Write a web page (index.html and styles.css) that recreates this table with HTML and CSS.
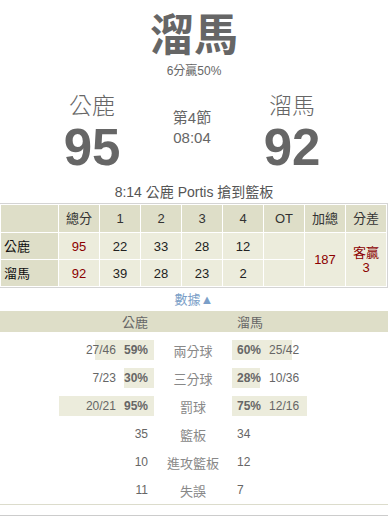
FILE: index.html
```html
<!DOCTYPE html>
<html lang="zh-Hant">
<head>
<meta charset="utf-8">
<title>公鹿 vs 溜馬</title>
<link rel="stylesheet" href="styles.css">
</head>
<body>
<div class="hero">
  <div class="title">溜馬</div>
  <div class="sub">6分贏50%</div>
</div>
<div class="match">
  <div class="team">
    <div class="tname">公鹿</div>
    <div class="score">95</div>
  </div>
  <div class="period">
    <div>第4節</div>
    <div>08:04</div>
  </div>
  <div class="team">
    <div class="tname">溜馬</div>
    <div class="score">92</div>
  </div>
</div>
<div class="play">8:14 公鹿 Portis 搶到籃板</div>
<table class="box">
  <colgroup>
    <col class="c-first"><col><col><col><col><col><col><col><col>
  </colgroup>
  <tr class="head">
    <th></th><th>總分</th><th>1</th><th>2</th><th>3</th><th>4</th><th>OT</th><th>加總</th><th>分差</th>
  </tr>
  <tr>
    <th class="lbl">公鹿</th><td class="red">95</td><td>22</td><td>33</td><td>28</td><td>12</td><td></td>
    <td class="red" rowspan="2">187</td><td class="red" rowspan="2">客贏<br>3</td>
  </tr>
  <tr>
    <th class="lbl">溜馬</th><td class="red">92</td><td>39</td><td>28</td><td>23</td><td>2</td><td></td>
  </tr>
</table>
<div class="more">數據▲</div>
<div class="stats">
  <div class="srow shead">
    <div class="l">公鹿</div><div class="m"></div><div class="r">溜馬</div>
  </div>
  <div class="sbody">
    <div class="srow">
      <div class="l bar" style="--w:59px"><span>27/46</span><b>59%</b></div>
      <div class="m">兩分球</div>
      <div class="r bar" style="--w:60px"><b>60%</b><span>25/42</span></div>
    </div>
    <div class="srow">
      <div class="l bar" style="--w:30px"><span>7/23</span><b>30%</b></div>
      <div class="m">三分球</div>
      <div class="r bar" style="--w:28px"><b>28%</b><span>10/36</span></div>
    </div>
    <div class="srow">
      <div class="l bar" style="--w:95px"><span>20/21</span><b>95%</b></div>
      <div class="m">罰球</div>
      <div class="r bar" style="--w:75px"><b>75%</b><span>12/16</span></div>
    </div>
    <div class="srow">
      <div class="l"><span>35</span></div>
      <div class="m">籃板</div>
      <div class="r"><span>34</span></div>
    </div>
    <div class="srow">
      <div class="l"><span>10</span></div>
      <div class="m">進攻籃板</div>
      <div class="r"><span>12</span></div>
    </div>
    <div class="srow">
      <div class="l"><span>11</span></div>
      <div class="m">失誤</div>
      <div class="r"><span>7</span></div>
    </div>
  </div>
</div>
<div class="foot"></div>
</body>
</html>
```
FILE: styles.css
```css
html, body {
  margin: 0;
  padding: 0;
  background: #fff;
}
body {
  width: 388px;
  font-family: "Liberation Sans", "Noto Sans CJK TC", sans-serif;
  color: #666;
}
.hero {
  text-align: center;
  padding-top: 9px;
}
.title {
  font-family: "Noto Sans CJK TC", sans-serif;
  font-size: 44px;
  font-weight: 700;
  line-height: 46px;
  color: #666;
}
.sub {
  font-size: 12px;
  line-height: 16px;
  margin-top: 8px;
  color: #666;
}
.match {
  display: grid;
  grid-template-columns: repeat(3, 100px);
  justify-content: center;
  padding-right: 4px;
  margin-top: 10px;
  align-items: start;
}
.team {
  text-align: center;
}
.tname {
  font-family: "Noto Sans CJK TC", sans-serif;
  font-weight: 300;
  font-size: 23px;
  line-height: 30px;
  color: #666;
}
.score {
  font-family: "Liberation Sans", sans-serif;
  font-weight: 700;
  font-size: 51px;
  line-height: 50px;
  color: #666;
  margin-top: 4px;
}
.period {
  text-align: center;
  font-size: 15px;
  line-height: 20px;
  color: #666;
  margin-top: 19px;
}
.play {
  text-align: center;
  font-size: 14px;
  line-height: 18px;
  color: #555;
  margin-top: 10px;
}
.box {
  width: 388px;
  table-layout: fixed;
  border-collapse: separate;
  border-spacing: 1px;
  border: 1px solid #d4d4d4;
  border-left: 0;
  margin-top: 2px;
  font-family: "Liberation Sans", "Noto Sans CJK TC", sans-serif;
  font-size: 13px;
  color: #222;
}
.box col.c-first {
  width: 57px;
}
.box th, .box td {
  height: 26px;
  padding: 0;
  text-align: center;
  font-weight: normal;
  background: #ececdc;
  line-height: 15px;
}
.box tr.head th {
  background: #dedec8;
  height: 27px;
  color: #333;
}
.box th.lbl {
  background: #dedec8;
  text-align: left;
  padding-left: 3px;
  color: #111;
}
.box .red {
  color: #8b0000;
}
.more {
  text-align: center;
  font-size: 13px;
  line-height: 16px;
  color: #7b9fc8;
  margin-top: 4px;
}
.stats {
  margin-top: 3px;
  font-size: 12px;
}
.srow {
  display: grid;
  grid-template-columns: 154px 78px 1fr;
  height: 20px;
  align-items: center;
}
.shead {
  height: 21px;
  background: #dedec8;
  color: #111;
  font-size: 13px;
}
.shead .l {
  text-align: right;
}
.sbody {
  display: flex;
  flex-direction: column;
  gap: 8px;
  padding: 8px 0 4px;
  border-bottom: 1px solid #dcdccc;
}
.srow .l, .srow .r {
  display: flex;
  align-items: center;
  height: 20px;
  gap: 8px;
  color: #666;
}
.srow .l {
  justify-content: flex-end;
  padding-right: 6px;
}
.srow .r {
  justify-content: flex-start;
  padding-left: 5px;
}
.srow .m {
  text-align: center;
  color: #888;
  font-family: "Noto Sans CJK TC", sans-serif;
  font-size: 13px;
}
.bar.l {
  background: linear-gradient(#ececdc, #ececdc) right center / var(--w) 100% no-repeat;
}
.bar.r {
  background: linear-gradient(#ececdc, #ececdc) left center / var(--w) 100% no-repeat;
}
.srow b {
  font-weight: 700;
  color: #666;
}
.foot {
  margin-top: 10px;
  border-top: 1px solid #ccc;
}
```
